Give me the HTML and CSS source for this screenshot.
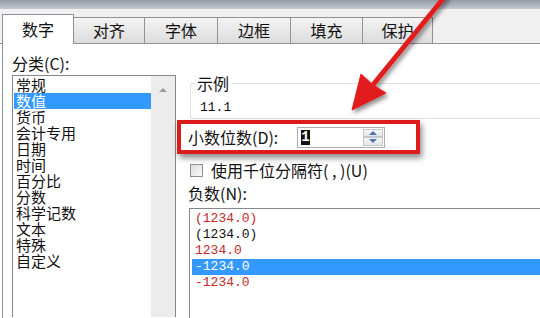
FILE: index.html
```html
<!DOCTYPE html>
<html lang="zh-CN">

<head>
    <meta charset="UTF-8">
    <meta name="viewport" content="width=device-width, initial-scale=1.0">
    <title>设置单元格格式</title>
    <link rel="stylesheet" href="styles.css">
</head>

<body>
    <div class="frame-top"></div>

    <div class="tabs">
        <div class="tab active">数字</div>
        <div class="tab">对齐</div>
        <div class="tab">字体</div>
        <div class="tab">边框</div>
        <div class="tab">填充</div>
        <div class="tab">保护</div>
    </div>

    <div class="page">
        <div class="category">
            <div class="label">分类(C):</div>
            <div class="listbox">
                <ul class="items">
                    <li>常规</li>
                    <li class="selected">数值</li>
                    <li>货币</li>
                    <li>会计专用</li>
                    <li>日期</li>
                    <li>时间</li>
                    <li>百分比</li>
                    <li>分数</li>
                    <li>科学记数</li>
                    <li>文本</li>
                    <li>特殊</li>
                    <li>自定义</li>
                </ul>
                <div class="scrollbar"><span class="arrow-up"></span></div>
            </div>
        </div>

        <div class="options">
            <fieldset class="sample">
                <legend>示例</legend>
                <div class="sample-value">11.1</div>
            </fieldset>

            <div class="highlight">
                <span class="decimal-label">小数位数(D):</span>
                <div class="spin">
                    <span class="spin-value"><span class="caret">1</span></span>
                    <span class="spin-buttons">
                        <span class="spin-btn"><span class="tri-up"></span></span>
                        <span class="spin-btn"><span class="tri-down"></span></span>
                    </span>
                </div>
            </div>

            <div class="check"><span class="box"></span>使用千位分隔符( , )(U)</div>

            <div class="label neg-label">负数(N):</div>
            <ul class="negatives">
                <li class="red">(1234.0)</li>
                <li>(1234.0)</li>
                <li class="red">1234.0</li>
                <li class="selected">-1234.0</li>
                <li class="red">-1234.0</li>
            </ul>
        </div>
    </div>

    <!-- annotation arrow drawn over the dialog -->
    <svg class="pointer" width="540" height="318" viewBox="0 0 540 318">
        <defs>
            <filter id="shade" x="-30%" y="-30%" width="160%" height="160%">
                <feDropShadow dx="2" dy="3" stdDeviation="2" flood-color="#000" flood-opacity="0.45" />
            </filter>
        </defs>
        <g filter="url(#shade)" fill="#e01c1c" stroke="#e01c1c">
            <line x1="447" y1="-6" x2="372" y2="86" stroke-width="5" />
            <polygon points="352,110 361,74 373,85 386,93" stroke-width="1" stroke-linejoin="round" />
        </g>
    </svg>
</body>

</html>
```

FILE: styles.css
```css
/* Page base */
body {
    margin: 0;
    width: 540px;
    height: 318px;
    overflow: hidden;
    position: relative;
    background-color: #fff;
    color: #111;
    font-family: "Noto Sans CJK SC", sans-serif;
    font-size: 16px;
}

ul {
    list-style: none;
    margin: 0;
    padding: 0;
}

/* Window frame strip at the very top */
.frame-top {
    height: 9px;
    background: linear-gradient(#959ea8, #c3c8ce);
}

/* Tab strip */
.tabs {
    display: flex;
    align-items: flex-end;
    height: 34px;
    padding-left: 2px;
    background-color: #f0f0f0;
    border-bottom: 1px solid #8e9299;
}

.tab {
    box-sizing: border-box;
    height: 26px;
    margin-right: -1px;
    border: 1px solid #8e9299;
    border-bottom: none;
    background: linear-gradient(#f4f4f4, #dcdcdc);
    line-height: 24px;
    text-align: center;
}

.tab:nth-child(1) { width: 72px; }
.tab:nth-child(2) { width: 72px; }
.tab:nth-child(3) { width: 74px; }
.tab:nth-child(4) { width: 74px; }
.tab:nth-child(5) { width: 73px; }
.tab:nth-child(6) { width: 71px; }

.tab.active {
    position: relative;
    z-index: 1;
    height: 30px;
    margin-bottom: -1px;
    background: #fff;
    line-height: 28px;
}

/* Tab page */
.page {
    display: flex;
    height: 274px;
    margin-left: 2px;
    border-left: 1px solid #8e9299;
    overflow: hidden;
}

.label {
    height: 18px;
    line-height: 18px;
}

/* Category list (left) */
.category {
    width: 164px;
    padding-left: 9px;
}

.category .label {
    margin-top: 10px;
}

.listbox {
    display: flex;
    height: 241px;
    margin-top: 3px;
    border: 1px solid #828790;
    border-bottom: none;
}

.items {
    flex: 1;
    padding: 1px 0 0 1px;
    font-size: 15px;
    line-height: 16px;
}

.items li {
    height: 16px;
    padding-left: 2px;
}

.items .selected,
.negatives .selected {
    background-color: #3399ff;
    color: #fff;
}

.scrollbar {
    width: 24px;
    display: flex;
    justify-content: center;
    background-color: #ececec;
}

.arrow-up {
    width: 0;
    height: 0;
    margin-top: 12px;
    border-left: 4px solid transparent;
    border-right: 4px solid transparent;
    border-bottom: 4px solid #9c9c9c;
}

/* Options (right) */
.options {
    flex: 1;
    min-width: 0;
}

.sample {
    margin: 31px 0 0 14px;
    padding: 0 0 1px 4px;
    border: 1px solid #dbe1e6;
    border-right: none;
    border-radius: 3px 0 0 3px;
    min-width: 0;
}

.sample legend {
    padding: 0 2px;
    line-height: 16px;
}

.sample-value {
    margin-top: 8px;
    padding-left: 5px;
    font-family: "Liberation Mono", monospace;
    font-size: 13px;
    line-height: 18px;
}

/* Red callout round the decimal places row */
.highlight {
    display: flex;
    align-items: center;
    width: 235px;
    height: 26px;
    margin: 1px 0 0 1px;
    border: 4px solid #dc1b1b;
    box-shadow: 2px 4px 6px rgba(0, 0, 0, 0.45);
}

.decimal-label {
    box-sizing: border-box;
    width: 116px;
    padding-left: 7px;
}

.spin {
    box-sizing: border-box;
    display: flex;
    width: 88px;
    height: 21px;
    border: 1px solid #abadb3;
    background: #fff;
}

.spin-value {
    flex: 1;
    padding: 2px 0 0 3px;
    font-family: "Liberation Mono", monospace;
    font-size: 14px;
    line-height: 15px;
}

.caret {
    display: inline-block;
    width: 9px;
    background-color: #111;
    color: #fff;
    font-weight: bold;
    text-align: center;
}

.spin-buttons {
    display: flex;
    flex-direction: column;
    width: 20px;
    margin: 1px 1px 1px 0;
}

.spin-btn {
    flex: 1;
    display: flex;
    align-items: center;
    justify-content: center;
    border: 1px solid #c5c9cf;
    background: linear-gradient(#f7f7f7, #e3e6ea);
}

.tri-up,
.tri-down {
    width: 0;
    height: 0;
    border-left: 4px solid transparent;
    border-right: 4px solid transparent;
}

.tri-up {
    border-bottom: 4px solid #4d74b0;
}

.tri-down {
    border-top: 4px solid #4d74b0;
}

/* Thousands separator checkbox */
.check {
    display: flex;
    align-items: center;
    height: 18px;
    margin: 7px 0 0 14px;
}

.check .box {
    box-sizing: border-box;
    width: 13px;
    height: 13px;
    margin-right: 8px;
    border: 1px solid #8f8f8f;
    background: linear-gradient(135deg, #dcdcdc, #fafafa);
}

/* Negative numbers list */
.neg-label {
    margin: 5px 0 0 12px;
}

.negatives {
    height: 108px;
    margin: 6px 0 0 13px;
    padding-top: 2px;
    border: 1px solid #828790;
    border-right: none;
    border-bottom: none;
    font-family: "Liberation Mono", monospace;
    font-size: 13px;
    line-height: 16px;
}

.negatives li {
    margin-left: 2px;
    padding-left: 3px;
}

.negatives .red {
    color: #c4282b;
}

/* Overlay arrow */
.pointer {
    position: absolute;
    top: 0;
    left: 0;
    pointer-events: none;
}
```
